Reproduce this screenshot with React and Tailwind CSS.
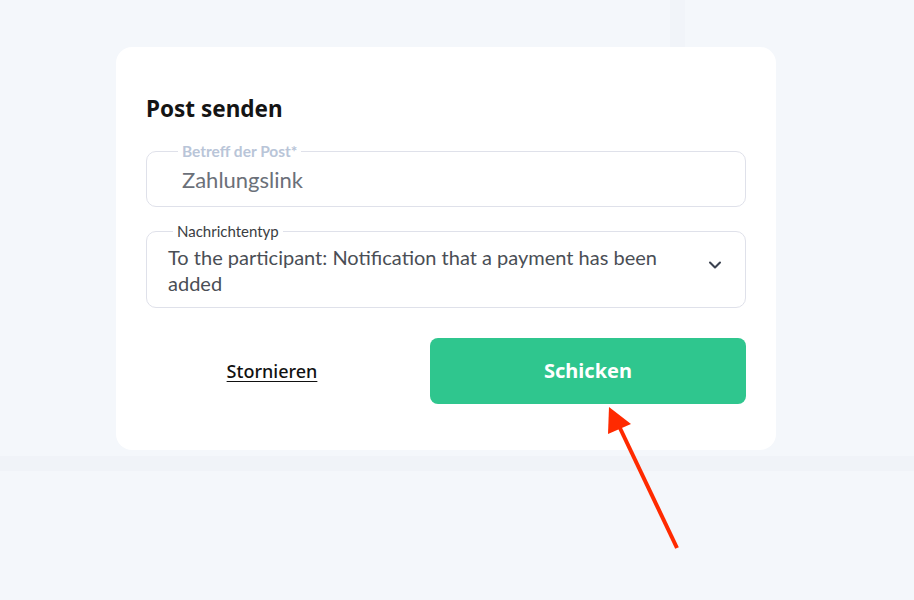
import React from 'react';
import { ChevronDown } from 'lucide-react';

const lato = { fontFamily: 'Lato, "Noto Sans", sans-serif' };

const SendPostCard = () => {
  return (
    <div className="w-[660px] ml-[116px] bg-white rounded-2xl px-[30px] pt-[47px] pb-[46px]">
      <h2 className="text-[22.5px] leading-[30px] font-bold text-[#141414]" style={{ fontFamily: '"Noto Sans", sans-serif' }}>
        Post senden
      </h2>

      {/* Subject */}
      <fieldset className="mt-[19px] border border-[#dfe1ea] rounded-[10px] pl-[31px] pr-4 pb-[14px]" style={lato}>
        <legend className="px-[4px] text-[15.5px] leading-[16px] font-bold text-[#b9c5d8]">Betreff der Post*</legend>
        <div className="mt-[9px] pl-[4px] text-[22px] leading-[24px] text-[#6b7079]">Zahlungslink</div>
      </fieldset>

      {/* Message type */}
      <fieldset className="mt-[16px] border border-[#dfe1ea] rounded-[10px] pl-[21px] pr-[20px] pb-[11px]" style={lato}>
        <legend className="ml-[5px] px-[4px] text-[15px] leading-[16px] text-[#3a3d42]">Nachrichtentyp</legend>
        <div className="mt-[5px] flex items-start justify-between">
          <div className="text-[20px] leading-[26px] text-[#4a4e55] w-[500px]">
            To the participant: Notification that a payment has been added
          </div>
          <ChevronDown size={20} strokeWidth={2.5} className="text-[#3b4250] mt-[11px]" />
        </div>
      </fieldset>

      <div className="mt-[30px] flex items-center" style={{ fontFamily: '"Noto Sans", sans-serif' }}>
        <div className="w-[252px] text-center">
          <a href="#" className="text-[18px] font-medium text-[#111] underline underline-offset-[3px]">Stornieren</a>
        </div>
        <button className="ml-auto w-[316px] h-[66px] rounded-lg bg-[#2fc68e] text-white text-[20px] font-bold">
          Schicken
        </button>
      </div>
    </div>
  );
};

const App = () => {
  return (
    <div className="relative w-[914px] h-[600px] bg-[#f4f7fb] overflow-hidden">
      <div className="h-[47px]">
        <div className="ml-[670px] w-[15px] h-full bg-[#f1f4f9]" />
      </div>
      <SendPostCard />
      <div className="mt-[6px] h-[15px] bg-[#f0f3f8]" />

      {/* annotation arrow */}
      <svg className="absolute inset-0 pointer-events-none" width="914" height="600">
        <line x1="677" y1="548" x2="619" y2="426" stroke="#ff2a00" strokeWidth="4" />
        <polygon points="609,407 608,434 631,424" fill="#ff2a00" />
      </svg>
    </div>
  );
};

export default App;
